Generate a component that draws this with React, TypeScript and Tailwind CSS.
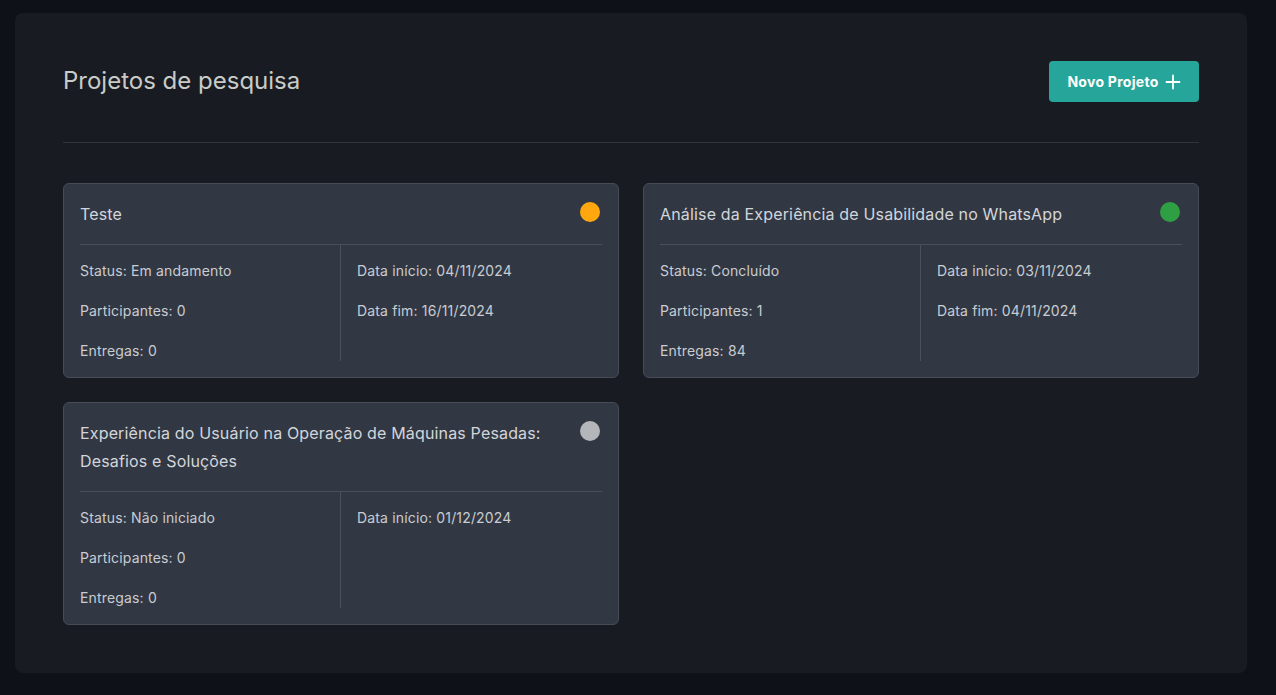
import React from 'react';

type Project = {
  title: string;
  status: string;
  dot: string;
  participantes: number;
  entregas: number;
  inicio: string;
  fim?: string;
};

const projects: Project[] = [
  { title: 'Teste', status: 'Em andamento', dot: 'bg-[#ffa70f]', participantes: 0, entregas: 0, inicio: '04/11/2024', fim: '16/11/2024' },
  {
    title: 'Análise da Experiência de Usabilidade no WhatsApp',
    status: 'Concluído',
    dot: 'bg-[#2ea043]',
    participantes: 1,
    entregas: 84,
    inicio: '03/11/2024',
    fim: '04/11/2024',
  },
  {
    title: 'Experiência do Usuário na Operação de Máquinas Pesadas: Desafios e Soluções',
    status: 'Não iniciado',
    dot: 'bg-[#b4b6ba]',
    participantes: 0,
    entregas: 0,
    inicio: '01/12/2024',
  },
];

const ProjectCard = ({ p }: { p: Project }) => (
  <div className="rounded-md border border-[#464c56] bg-[#323843] px-4 pt-4 pb-4 tracking-[0.01em]">
    <div className="flex items-start justify-between gap-6">
      <div className="text-base leading-[28px] text-[#d2d5da]">{p.title}</div>
      <div className={`mt-0.5 mr-0.5 h-5 w-5 shrink-0 rounded-full ${p.dot}`} />
    </div>
    <div className="mt-4 grid grid-cols-2 border-t border-[#4a505a] text-sm leading-5 text-[#c9ccd2]">
      <div className="flex flex-col gap-5 border-r border-[#4a505a] pt-4">
        <div>Status: {p.status}</div>
        <div>Participantes: {p.participantes}</div>
        <div>Entregas: {p.entregas}</div>
      </div>
      <div className="flex flex-col gap-5 pt-4 pl-4">
        <div>Data início: {p.inicio}</div>
        {p.fim && <div>Data fim: {p.fim}</div>}
      </div>
    </div>
  </div>
);

export default function App() {
  return (
    <div
      className="min-h-screen bg-[#0e1117] pt-[13px] pr-[29px] pb-[23px] pl-[15px]"
      style={{ fontFamily: 'Inter, "Noto Sans", sans-serif' }}
    >
      <div className="rounded-lg bg-[#181b21] p-12">
        <div className="flex items-center justify-between">
          <h1 className="-mt-0.5 text-2xl text-[#c9cbc8]">Projetos de pesquisa</h1>
          <button className="flex h-[41px] w-[150px] items-center justify-center gap-1.5 rounded bg-[#26a69a] text-sm font-bold tracking-[0.02em] text-white">
            Novo Projeto
            <svg width="16" height="16" viewBox="0 0 16 16" fill="none" stroke="currentColor" strokeWidth="1.8" strokeLinecap="round">
              <path d="M8 1.5v13M1.5 8h13" />
            </svg>
          </button>
        </div>
        <div className="my-10 border-t border-[#30343b]" />
        <div className="grid grid-cols-2 items-start gap-6">
          {projects.map((p) => (
            <ProjectCard key={p.title} p={p} />
          ))}
        </div>
      </div>
    </div>
  );
}
